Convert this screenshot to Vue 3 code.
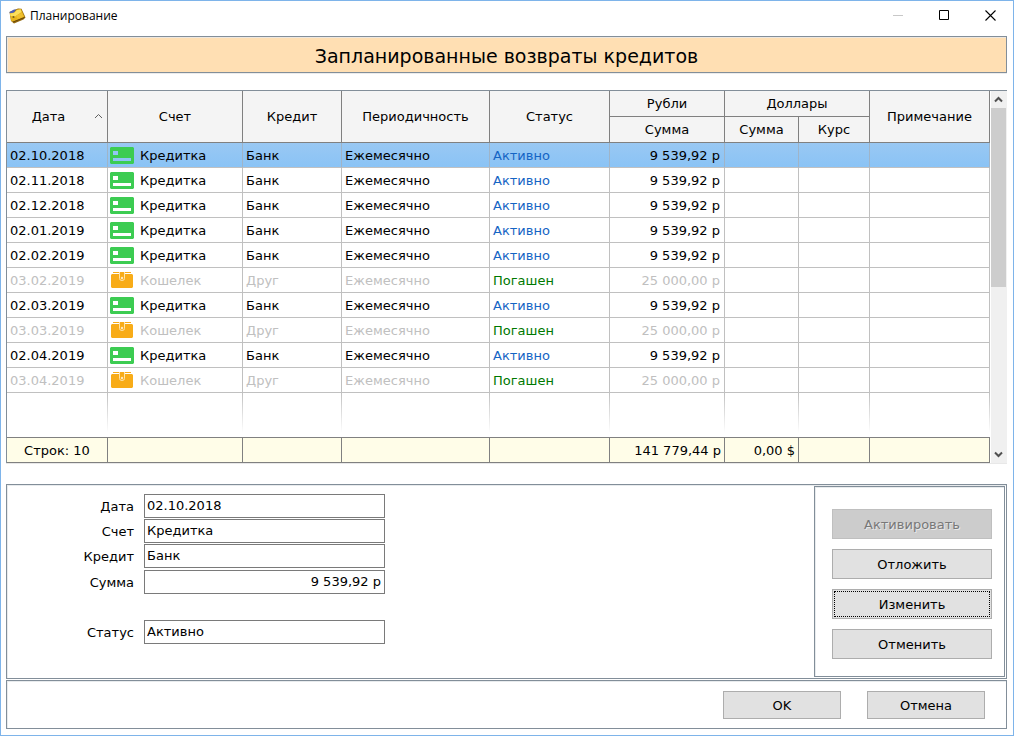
<script setup>
import { reactive } from 'vue'

const rows = [
  { date: '02.10.2018', credit: true, selected: true },
  { date: '02.11.2018', credit: true },
  { date: '02.12.2018', credit: true },
  { date: '02.01.2019', credit: true },
  { date: '02.02.2019', credit: true },
  { date: '03.02.2019', credit: false },
  { date: '02.03.2019', credit: true },
  { date: '03.03.2019', credit: false },
  { date: '02.04.2019', credit: true },
  { date: '03.04.2019', credit: false },
]

const form = reactive({
  date: '02.10.2018',
  account: 'Кредитка',
  loan: 'Банк',
  sum: '9 539,92 р',
  status: 'Активно',
})
</script>

<template>
  <main class="window">
    <header class="titlebar">
      <svg class="app-icon" width="17" height="16" viewBox="0 0 17 16" aria-hidden="true">
        <path d="M.5 4 9 .5 12.5 .8 16.5 9.5 14.5 11.5 5 15.5 2 13Z" fill="#94690f" />
        <path d="M.5 4 5 1.5 7 1.5 5 5 1 5.5Z" fill="#4a5fb8" />
        <path d="M1 5.5 5 4.5 8 1.5 12 1 15.5 9 4 13.8 2 12.5Z" fill="#e6b41c" />
        <path d="M1 5.5 5 5 8 2 11.5 1.5 12.5 4 6 8.5 1.5 8Z" fill="#fbdf5c" />
        <path d="M7 7.5 13 5 14.5 8.5 8.5 11Z" fill="#efc030" />
        <path d="M4 14 15.5 9.5" stroke="#684608" fill="none" />
        <circle cx="4.5" cy="9" r="1.1" fill="#745d1f" />
      </svg>
      <span class="caption">Планирование</span>
      <div class="window-controls">
        <button type="button" aria-label="Свернуть" disabled>
          <svg width="11" height="11" viewBox="0 0 11 11"><path d="M0 5.5H10" stroke="#c8c8c8" /></svg>
        </button>
        <button type="button" aria-label="Развернуть">
          <svg width="11" height="11" viewBox="0 0 11 11"><path d="M.5 .5H9.5V9.5H.5Z" fill="none" stroke="#000" /></svg>
        </button>
        <button type="button" aria-label="Закрыть">
          <svg width="11" height="11" viewBox="0 0 11 11"><path d="M.5 .5 10.5 10.5M10.5 .5 .5 10.5" fill="none" stroke="#000" stroke-width="1.1" /></svg>
        </button>
      </div>
    </header>

    <h1 class="banner">Запланированные возвраты кредитов</h1>

    <section class="grid">
      <table>
        <colgroup>
          <col class="c-date"><col class="c-account"><col class="c-loan"><col class="c-period"><col class="c-status">
          <col class="c-rub"><col class="c-usd"><col class="c-rate"><col>
        </colgroup>
        <thead>
          <tr>
            <th rowspan="2" aria-sort="ascending">
              <div class="sorted">
                <span>Дата</span>
                <svg width="9" height="8" viewBox="0 0 9 8" aria-hidden="true"><path d="M1 5 4.5 1.5 8 5" fill="none" stroke="#606060" /></svg>
              </div>
            </th>
            <th rowspan="2">Счет</th>
            <th rowspan="2">Кредит</th>
            <th rowspan="2">Периодичность</th>
            <th rowspan="2">Статус</th>
            <th>Рубли</th>
            <th colspan="2">Доллары</th>
            <th rowspan="2">Примечание</th>
          </tr>
          <tr>
            <th>Сумма</th>
            <th>Сумма</th>
            <th>Курс</th>
          </tr>
        </thead>
        <tbody>
          <tr v-for="row in rows" :key="row.date" :class="{ selected: row.selected, closed: !row.credit }">
            <td>{{ row.date }}</td>
            <td class="account-cell">
              <div class="account">
                <svg v-if="row.credit" width="24" height="17" viewBox="0 0 24 17" aria-hidden="true">
                  <path fill="#3ccc52" fill-rule="evenodd" d="M1 0H23L24 1V16L23 17H1L0 16V1ZM3 4V8H8V4ZM3 11V14H21V11Z" />
                </svg>
                <svg v-else width="24" height="17" viewBox="0 0 24 17" aria-hidden="true">
                  <path fill="#f8ac18" d="M3 0H9V1H3ZM10 0H14V1H10ZM15 0H21V1H15ZM2 2H22L23 3V15L22 16H2L1 15V3Z" />
                  <path d="M9.5 0V6.5Q9.5 8.5 12 8.5T14.5 6.5V0" fill="#f8ac18" stroke="#ffe3a8" />
                  <circle cx="12" cy="6" r="1.2" fill="#ffe9bd" />
                </svg>
                <span>{{ row.credit ? 'Кредитка' : 'Кошелек' }}</span>
              </div>
            </td>
            <td>{{ row.credit ? 'Банк' : 'Друг' }}</td>
            <td>Ежемесячно</td>
            <td class="status">{{ row.credit ? 'Активно' : 'Погашен' }}</td>
            <td class="money">{{ row.credit ? '9 539,92 р' : '25 000,00 р' }}</td>
            <td></td>
            <td></td>
            <td></td>
          </tr>
          <tr class="filler" aria-hidden="true"><td v-for="n in 9" :key="n"></td></tr>
        </tbody>
        <tfoot>
          <tr>
            <td class="count">Строк: 10</td>
            <td></td>
            <td></td>
            <td></td>
            <td></td>
            <td class="total">141 779,44 р</td>
            <td class="total">0,00 $</td>
            <td></td>
            <td></td>
          </tr>
        </tfoot>
      </table>
      <div class="scrollbar">
        <button type="button" aria-label="Прокрутить вверх">
          <svg width="9" height="7" viewBox="0 0 9 7"><path d="M1 5.5 4.5 2 8 5.5" fill="none" stroke="#505050" stroke-width="2" /></svg>
        </button>
        <div class="track"><div class="thumb"></div></div>
        <button type="button" aria-label="Прокрутить вниз">
          <svg width="9" height="7" viewBox="0 0 9 7"><path d="M1 1.5 4.5 5 8 1.5" fill="none" stroke="#505050" stroke-width="2" /></svg>
        </button>
      </div>
    </section>

    <section class="panel details">
      <form class="fields" @submit.prevent>
        <div class="field"><label for="f-date">Дата</label><input id="f-date" v-model="form.date" type="text"></div>
        <div class="field"><label for="f-account">Счет</label><input id="f-account" v-model="form.account" type="text"></div>
        <div class="field"><label for="f-loan">Кредит</label><input id="f-loan" v-model="form.loan" type="text"></div>
        <div class="field sum"><label for="f-sum">Сумма</label><input id="f-sum" v-model="form.sum" type="text"></div>
        <div class="field state"><label for="f-status">Статус</label><input id="f-status" v-model="form.status" type="text"></div>
      </form>
      <div class="actions">
        <button type="button" class="btn" disabled>Активировать</button>
        <button type="button" class="btn">Отложить</button>
        <button type="button" class="btn current">Изменить</button>
        <button type="button" class="btn">Отменить</button>
      </div>
    </section>

    <footer class="panel dialog-buttons">
      <button type="button" class="btn">OK</button>
      <button type="button" class="btn">Отмена</button>
    </footer>
  </main>
</template>

<style>
body {
  margin: 0;
  background: #fff;
}
</style>

<style scoped>
* {
  box-sizing: border-box;
}
.window {
  display: flex;
  flex-direction: column;
  min-height: 100vh;
  padding: 0 6px 6px 5px;
  border: 1px solid #7eb4ea;
  background: #fff;
  color: #000;
  font: 13px/16px "DejaVu Sans", Verdana, sans-serif;
}
button,
input {
  font: inherit;
  color: inherit;
  border-radius: 0;
}
.titlebar {
  display: flex;
  align-items: center;
  height: 29px;
  margin-bottom: 6px;
  padding-left: 3px;
  font: 12px/16px "Open Sans", "Noto Sans", sans-serif;
}
.caption {
  margin-left: 4px;
}
.window-controls {
  display: flex;
  margin-left: auto;
  margin-right: -6px;
}
.window-controls button {
  display: flex;
  align-items: center;
  justify-content: center;
  width: 46px;
  height: 29px;
  padding: 0;
  border: 0;
  background: none;
}
.banner {
  display: flex;
  align-items: center;
  justify-content: center;
  height: 37px;
  margin: 0 0 17px;
  padding-top: 2px;
  border: 1px solid #828e99;
  background: #ffdfb3;
  box-shadow: inset 1px 1px #eee7de, 0 1px #ececec;
  font-size: 19px;
  font-weight: 400;
  line-height: 24px;
}
.grid {
  display: flex;
  margin-bottom: 21px;
  border-top: 1px solid #828e99;
  border-left: 1px solid #828e99;
  box-shadow: 0 1px #e8e8e8;
}
table {
  flex: 1;
  min-width: 0;
  table-layout: fixed;
  border-collapse: separate;
  border-spacing: 0;
}
.c-date { width: 101px; }
.c-account { width: 135px; }
.c-loan { width: 99px; }
.c-period { width: 148px; }
.c-status { width: 120px; }
.c-rub { width: 115px; }
.c-usd { width: 74px; }
.c-rate { width: 71px; }
th {
  height: 26px;
  padding: 0;
  border-right: 1px solid #808080;
  border-bottom: 1px solid #808080;
  background: #f4f4f4;
  font-weight: 400;
}
.sorted {
  display: flex;
  align-items: center;
  padding: 0 4px 0 0;
}
.sorted span {
  flex: 1;
  padding-right: 4px;
}
td {
  height: 25px;
  padding: 2px 3px 0;
  border-right: 1px solid #c0c0c0;
  border-bottom: 1px solid #c0c0c0;
  white-space: nowrap;
}
td.account-cell {
  padding-top: 0;
}
.selected td {
  border-right-color: #9fb4c8;
  background: linear-gradient(#99c8f3, #8ac3f5);
}
.closed td {
  color: #c0c0c0;
}
.account {
  display: flex;
  align-items: center;
  margin-left: -1px;
  gap: 6px;
}
.account svg {
  flex: none;
}
.account span {
  padding-top: 1px;
}
td.status {
  color: #1464c4;
}
.closed td.status {
  color: #007800;
}
td.money {
  padding-right: 4px;
  text-align: right;
}
.filler td {
  height: 44px;
  border: 0;
  background: linear-gradient(#c0c0c0, #fff 40px) right / 1px 100% no-repeat;
}
tfoot td {
  height: 26px;
  border-color: #808080;
  border-top: 1px solid #808080;
  background: #fffde8;
}
td.count {
  text-align: center;
}
td.total {
  text-align: right;
}
.scrollbar {
  display: flex;
  flex-direction: column;
  width: 16px;
  margin-left: 1px;
  background: #f0f0f0;
}
.scrollbar button {
  display: flex;
  align-items: center;
  justify-content: center;
  height: 17px;
  padding: 0 2px 0 0;
  border: 0;
  background: none;
}
.track {
  flex: 1;
}
.thumb {
  width: 15px;
  height: 53%;
  background: #cdcdcd;
}
.panel {
  display: flex;
  border: 1px solid #828e99;
  box-shadow: inset 1px 1px #e8ebed;
}
.details {
  margin-bottom: 1px;
}
.fields {
  display: flex;
  flex-direction: column;
  flex: 1;
  gap: 1px;
  padding-top: 9px;
}
.field {
  display: flex;
  align-items: center;
  gap: 10px;
}
.field label {
  width: 127px;
  padding-top: 2px;
  text-align: right;
}
.field input {
  width: 241px;
  height: 24px;
  padding: 0 2px 1px;
  border: 1px solid #7a7a7a;
  background: #fff;
  outline: 0;
}
.sum {
  margin-top: 1px;
}
.field.sum input {
  padding-right: 3px;
  text-align: right;
}
.state {
  margin-top: 25px;
}
.actions {
  display: flex;
  flex-direction: column;
  gap: 10px;
  margin: 1px;
  padding: 22px 12px 17px 17px;
  border: 1px solid #828e99;
  box-shadow: inset 1px 1px #e8ebed;
}
.btn {
  width: 160px;
  height: 30px;
  padding: 2px 0 0;
  border: 1px solid #adadad;
  background: #e1e1e1;
}
.btn:disabled {
  border-color: #bfbfbf;
  background: #cccccc;
  color: #787878;
  text-shadow: 1px 1px #e8e8e8;
}
.btn.current {
  outline: 1px dotted #000;
  outline-offset: -3px;
}
.dialog-buttons {
  justify-content: flex-end;
  gap: 26px;
  padding: 10px 21px 9px;
}
.dialog-buttons .btn {
  width: 118px;
  height: 28px;
}
</style>
